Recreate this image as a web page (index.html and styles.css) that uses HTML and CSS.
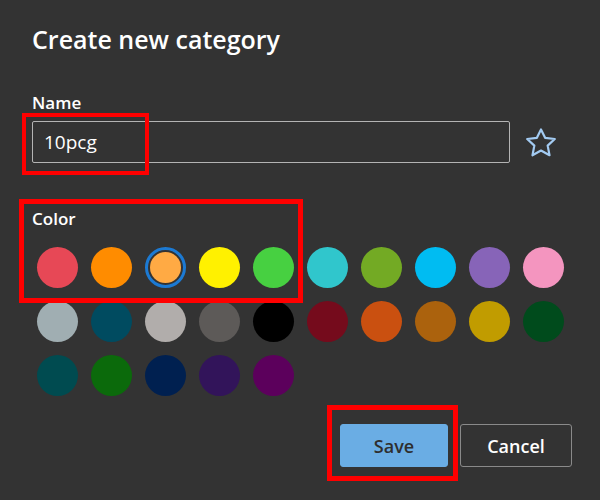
FILE: index.html
```html
<!DOCTYPE html>
<html lang="en">
<head>
<meta charset="utf-8">
<title>Create new category</title>
<link rel="stylesheet" href="styles.css">
</head>
<body>
<div class="dialog">
  <h1 class="title">Create new category</h1>
  <label class="label label-name" for="name">Name</label>
  <div class="name-row">
    <input id="name" class="name-input" type="text" value="10pcg">
    <svg class="star" width="30" height="29" viewBox="0 0 30 29" aria-hidden="true">
      <polygon points="15,1.5 19.11,9.84 28.79,11.02 21.66,17.66 23.52,27.23 15,22.5 6.48,27.23 8.34,17.66 1.21,11.02 10.89,9.84" fill="none" stroke="#a3cbf2" stroke-width="2.2" stroke-linejoin="round"/>
    </svg>
  </div>
  <div class="label label-color">Color</div>
  <div class="swatches">
    <span class="sw" style="background:#e74856"></span>
    <span class="sw" style="background:#ff8c00"></span>
    <span class="sw selected" style="background-color:#ffaa44"></span>
    <span class="sw" style="background:#fff100"></span>
    <span class="sw" style="background:#47d041"></span>
    <span class="sw" style="background:#30c6cc"></span>
    <span class="sw" style="background:#73aa24"></span>
    <span class="sw" style="background:#00bcf2"></span>
    <span class="sw" style="background:#8764b8"></span>
    <span class="sw" style="background:#f495bf"></span>
    <span class="sw" style="background:#a0aeb2"></span>
    <span class="sw" style="background:#004b60"></span>
    <span class="sw" style="background:#b1adab"></span>
    <span class="sw" style="background:#5d5a58"></span>
    <span class="sw" style="background:#000000"></span>
    <span class="sw" style="background:#750b1c"></span>
    <span class="sw" style="background:#ca5010"></span>
    <span class="sw" style="background:#ab620d"></span>
    <span class="sw" style="background:#c19c00"></span>
    <span class="sw" style="background:#004b1c"></span>
    <span class="sw" style="background:#004b50"></span>
    <span class="sw" style="background:#0b6a0b"></span>
    <span class="sw" style="background:#002050"></span>
    <span class="sw" style="background:#32145a"></span>
    <span class="sw" style="background:#5c005c"></span>
  </div>
  <div class="actions">
    <button class="btn btn-primary" type="button">Save</button>
    <button class="btn btn-default" type="button">Cancel</button>
  </div>
</div>
<div class="mark mark-name"></div>
<div class="mark mark-color"></div>
<div class="mark mark-save"></div>
</body>
</html>
```
FILE: styles.css
```css
html, body {
  margin: 0;
  padding: 0;
  background: #333333;
}
body {
  width: 600px;
  height: 500px;
  overflow: hidden;
  position: relative;
  font-family: "Open Sans", "Noto Sans", sans-serif;
  color: #ffffff;
}
.dialog {
  padding: 23px 28px 0 32px;
  display: flex;
  flex-direction: column;
}
.title {
  margin: 0;
  font-size: 25px;
  line-height: 32px;
  font-weight: 600;
}
.label {
  display: block;
  font-size: 17px;
  line-height: 22px;
  font-weight: 600;
}
.label-name {
  margin-top: 37px;
}
.name-row {
  margin-top: 7px;
  display: flex;
  align-items: center;
}
.name-input {
  box-sizing: border-box;
  width: 478px;
  height: 42px;
  margin: 0;
  padding: 0 11px;
  border: 1px solid #b4b4b4;
  border-radius: 2px;
  background: #333333;
  color: #ffffff;
  font-family: "Open Sans", "Noto Sans", sans-serif;
  font-size: 19px;
  outline: none;
}
.star {
  margin-left: 16px;
  display: block;
}
.label-color {
  margin-top: 45px;
}
.swatches {
  margin-top: 17px;
  margin-left: 5px;
  display: grid;
  grid-template-columns: repeat(10, 41px);
  column-gap: 13px;
  row-gap: 13px;
}
.sw {
  display: block;
  width: 41px;
  height: 41px;
  border-radius: 50%;
  box-sizing: border-box;
}
.sw.selected {
  border: 3px solid #1c7ad3;
  padding: 2px;
  background-clip: content-box;
}
.actions {
  margin-top: 28px;
  display: flex;
  justify-content: flex-end;
  gap: 12px;
}
.btn {
  box-sizing: border-box;
  height: 43px;
  border-radius: 3px;
  font-family: "Open Sans", "Noto Sans", sans-serif;
  font-size: 18px;
  font-weight: 600;
  margin: 0;
  padding: 0;
}
.btn-primary {
  width: 108px;
  background: #6aade4;
  border: 1px solid #6aade4;
  color: #2e2e2e;
}
.btn-default {
  width: 112px;
  background: #333333;
  border: 1px solid #8a8a8a;
  color: #ffffff;
}
.mark {
  position: absolute;
  box-sizing: border-box;
  border: 4px solid #ff0000;
}
.mark-name {
  left: 22px;
  top: 113px;
  width: 127px;
  height: 62px;
}
.mark-color {
  left: 19px;
  top: 199px;
  width: 284px;
  height: 104px;
  border-width: 5px;
}
.mark-save {
  left: 327px;
  top: 405px;
  width: 131px;
  height: 76px;
  border-width: 5px;
}
```
